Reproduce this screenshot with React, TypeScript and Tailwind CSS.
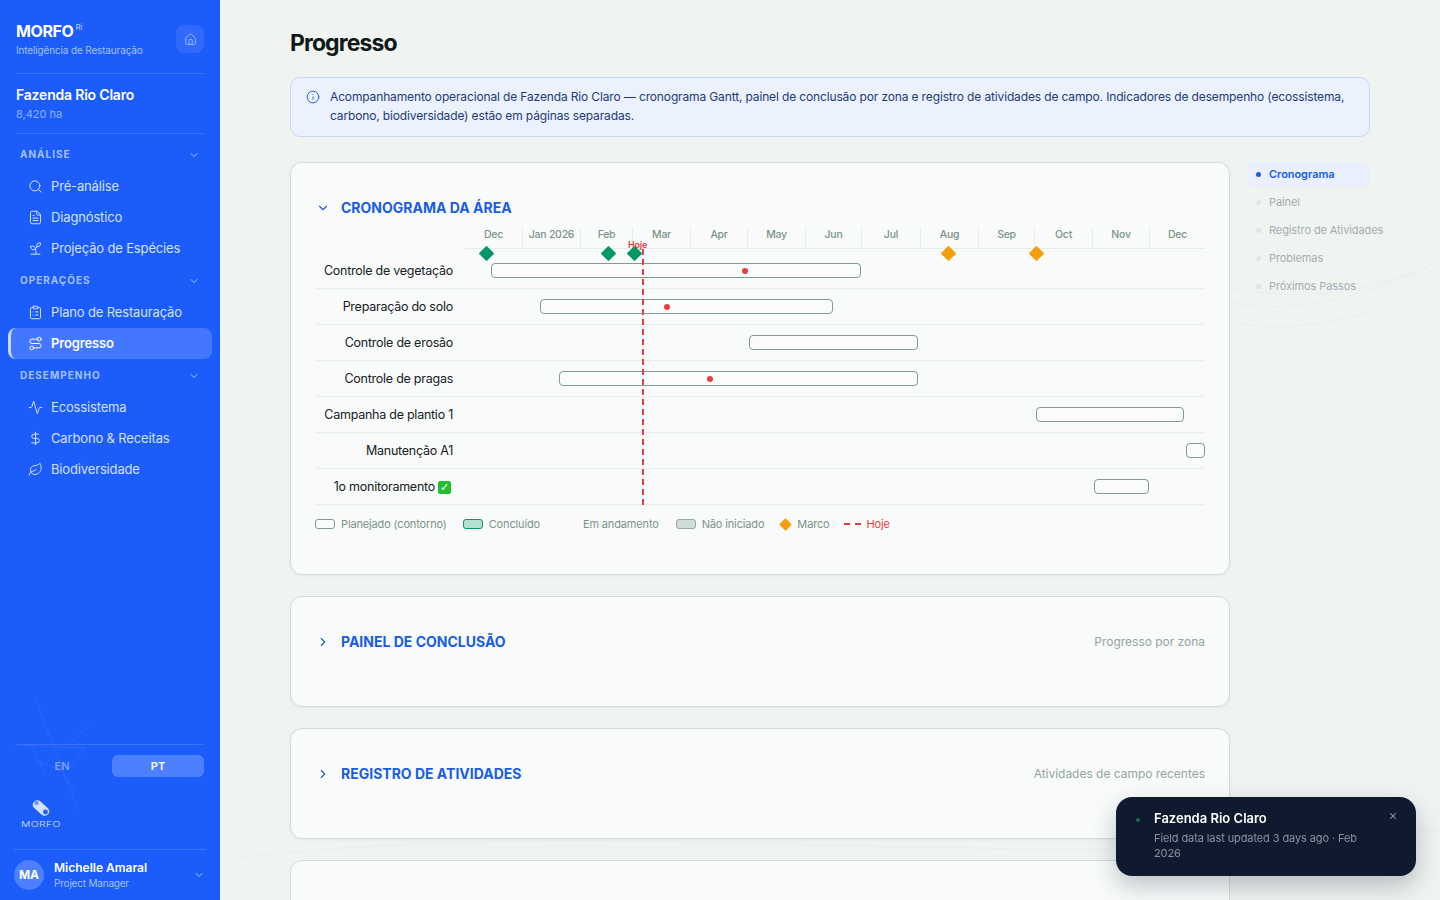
import {
  Activity,
  ChevronDown,
  ChevronRight,
  ClipboardList,
  DollarSign,
  FileText,
  House,
  Info,
  Leaf,
  Route,
  Search,
  Sprout,
  X,
} from 'lucide-react';

const TL_START = 465;
const pos = (x: number) => x - TL_START;

const months = [
  { name: 'Dec', w: 57 },
  { name: 'Jan 2026', w: 58 },
  { name: 'Feb', w: 52 },
  { name: 'Mar', w: 58 },
  { name: 'Apr', w: 57 },
  { name: 'May', w: 58 },
  { name: 'Jun', w: 56 },
  { name: 'Jul', w: 59 },
  { name: 'Aug', w: 58 },
  { name: 'Sep', w: 56 },
  { name: 'Oct', w: 58 },
  { name: 'Nov', w: 57 },
  { name: 'Dec', w: 56 },
];

const rows = [
  { label: 'Controle de vegetação', from: 491, to: 861, dot: 745 },
  { label: 'Preparação do solo', from: 540, to: 833, dot: 667 },
  { label: 'Controle de erosão', from: 749, to: 918 },
  { label: 'Controle de pragas', from: 559, to: 918, dot: 710 },
  { label: 'Campanha de plantio 1', from: 1036, to: 1184 },
  { label: 'Manutenção A1', from: 1186, to: 1205 },
  { label: '1o monitoramento', from: 1094, to: 1149, done: true },
];

const milestones = [
  { x: 486, color: 'bg-[#059669]' },
  { x: 608, color: 'bg-[#059669]' },
  { x: 634, color: 'bg-[#059669]' },
  { x: 948, color: 'bg-[#f59e0b]' },
  { x: 1036, color: 'bg-[#f59e0b]' },
];

const NavSection = ({ title }: { title: string }) => (
  <div className="flex h-[33px] items-center justify-between pl-[20px] pr-[20px]">
    <span className="text-[10px] font-bold tracking-[1px] text-[#a5c0ff]">{title}</span>
    <ChevronDown className="h-3 w-3 text-[#a5c0ff]" />
  </div>
);

const NavItem = ({ icon: Icon, label, active }: { icon: typeof Search; label: string; active?: boolean }) => (
  <div
    className={
      active
        ? 'mx-[8px] flex h-[31px] items-center gap-[8px] rounded-[8px] border-l-[3px] border-[#c7d8ff] bg-[#4377ff] pl-[17px] text-[13px] font-semibold tracking-[-0.15px] text-white'
        : 'mx-[8px] flex h-[31px] items-center gap-[8px] pl-[20px] text-[13px] tracking-[-0.15px] text-[#d3e0ff]'
    }
  >
    <Icon className="h-[15px] w-[15px]" strokeWidth={1.6} />
    <span>{label}</span>
  </div>
);

const Sidebar = () => (
  <aside className="relative flex h-screen w-[220px] shrink-0 flex-col overflow-hidden bg-[#1b5cfb] text-white">
    <svg className="absolute left-[10px] top-[690px] h-[120px] w-[110px] text-[#2c68fc]" viewBox="0 0 110 120" fill="none" stroke="currentColor" strokeWidth="1">
      <path d="M25 8 L68 120 M5 55 L75 58 M80 35 L58 55 M75 58 L60 78 M25 70 L50 80 L65 100 M22 55 L35 85" />
    </svg>
    <div className="relative mx-[16px] flex h-[74px] items-start justify-between border-b border-[#3a72fd] pt-[20px]">
      <div>
        <div className="flex items-start">
          <span className="text-[16px] font-bold leading-[22px] tracking-[-0.4px]">MORFO</span>
          <span className="ml-[2px] text-[8px] leading-[14px] text-[#b4caff]">Ri</span>
        </div>
        <div className="mt-[1px] text-[10px] leading-[14px] tracking-[-0.15px] text-[#a5c0ff]">Inteligência de Restauração</div>
      </div>
      <div className="mt-[5px] flex h-[28px] w-[28px] items-center justify-center rounded-[8px] bg-[#3069fb]">
        <House className="h-[13px] w-[13px] text-[#a5c0ff]" strokeWidth={1.6} />
      </div>
    </div>
    <div className="relative mx-[16px] h-[60px] border-b border-[#3a72fd] pt-[11px]">
      <div className="text-[14px] font-semibold leading-[20px] tracking-[-0.2px]">Fazenda Rio Claro</div>
      <div className="text-[11px] leading-[18px] text-[#8fb0ff]">8,420 ha</div>
    </div>
    <nav className="relative flex flex-col pt-[4px]">
      <NavSection title="ANÁLISE" />
      <NavItem icon={Search} label="Pré-análise" />
      <NavItem icon={FileText} label="Diagnóstico" />
      <NavItem icon={Sprout} label="Projeção de Espécies" />
      <NavSection title="OPERAÇÕES" />
      <NavItem icon={ClipboardList} label="Plano de Restauração" />
      <NavItem icon={Route} label="Progresso" active />
      <NavSection title="DESEMPENHO" />
      <NavItem icon={Activity} label="Ecossistema" />
      <NavItem icon={DollarSign} label="Carbono & Receitas" />
      <NavItem icon={Leaf} label="Biodiversidade" />
    </nav>
    <div className="relative mt-auto">
      <div className="mx-[16px] flex gap-[4px] border-t border-[#3a72fd] pt-[10px]">
        <div className="flex h-[22px] flex-1 items-center justify-center text-[11px] font-semibold text-[#7ea2fc]">EN</div>
        <div className="flex h-[22px] flex-1 items-center justify-center rounded-[6px] bg-[#4d80ff] text-[11px] font-semibold text-white">PT</div>
      </div>
      <div className="flex h-[72px] flex-col items-start pl-[21px] pt-[22px]">
        <svg className="ml-[11px] h-[18px] w-[18px]" viewBox="0 0 18 18">
          <rect x="-0.5" y="4.5" width="19" height="9" rx="4.5" fill="#d5e1ff" transform="rotate(42 9 9)" />
          <circle cx="4.5" cy="4" r="2.2" fill="#1b5cfb" opacity="0.55" />
          <circle cx="13.5" cy="13" r="2.4" fill="#1b5cfb" />
        </svg>
        <span className="mt-[3px] origin-left text-[7px] font-light leading-[9px] tracking-[0.2px] text-[#d5e1ff] [transform:scaleX(1.5)]">MORFO</span>
      </div>
      <div className="mx-[14px] flex h-[51px] items-center border-t border-[#3a72fd]">
        <div className="flex h-[30px] w-[30px] items-center justify-center rounded-full bg-[#4d80ff] text-[12px] font-bold">MA</div>
        <div className="ml-[10px] flex-1">
          <div className="text-[12px] font-semibold leading-[16px]">Michelle Amaral</div>
          <div className="text-[10px] leading-[15px] tracking-[-0.2px] text-[#a5c0ff]">Project Manager</div>
        </div>
        <ChevronDown className="mr-[1px] h-3 w-3 text-[#a5c0ff]" />
      </div>
    </div>
  </aside>
);

const Gantt = () => (
  <div>
    <div className="ml-[150px] flex h-[21px] border-b border-[#e6ecea]">
      {months.map((m, i) => (
        <div
          key={i}
          className={
            (i === 0 ? '' : 'border-l border-[#e9eeec] ') +
            'flex items-start justify-center text-[10.5px] font-medium leading-[14px] tracking-[-0.25px] text-[#7b9389]'
          }
          style={{ width: m.w }}
        >
          {m.name}
        </div>
      ))}
    </div>
    <div className="relative pt-[4px]">
      {rows.map((r) => (
        <div key={r.label} className="flex h-[36px] border-b border-[#e9eeec]">
          <div className="flex w-[150px] shrink-0 items-center justify-end pr-[12px] pt-[2px] text-[12.5px] tracking-[-0.25px] text-[#17211d]">
            {r.label}
            {r.done && (
              <span className="ml-[3px] mr-[2px] flex h-[13px] w-[13px] items-center justify-center rounded-[2px] bg-[#22c02f] font-['DejaVu_Sans',sans-serif] text-[11px] font-bold leading-none text-white">
                ✓
              </span>
            )}
          </div>
          <div className="relative flex-1">
            <div
              className="absolute top-[10px] h-[15px] rounded-[4px] border border-[#7f9c91] bg-white/30"
              style={{ left: pos(r.from), width: r.to - r.from }}
            />
            {r.dot && (
              <div
                className="absolute top-[15px] h-[6px] w-[6px] rounded-full bg-[#e53e3e]"
                style={{ left: pos(r.dot) - 3 }}
              />
            )}
          </div>
        </div>
      ))}
      <div className="absolute left-0 right-0 top-0 h-0">
        <div className="relative ml-[150px]">
          {milestones.map((m) => (
            <div
              key={m.x}
              className={'absolute top-[-1px] h-[11px] w-[11px] rotate-45 rounded-[1px] ' + m.color}
              style={{ left: pos(m.x) - 5.5 }}
            />
          ))}
          <div
            className="absolute top-0 h-[256px] w-0 border-l-2 border-dashed border-[#e53e3e]"
            style={{ left: pos(643) - 1 }}
          />
          <div
            className="absolute top-[-10px] text-[9px] font-semibold leading-[11px] tracking-[-0.2px] text-[#e53e3e]"
            style={{ left: pos(628) }}
          >
            Hoje
          </div>
        </div>
      </div>
    </div>
    <div className="mt-[13px] flex h-[12px] items-center text-[11px] tracking-[-0.15px] text-[#7b9389]">
      <span className="h-[10px] w-[20px] rounded-[3px] border border-[#7f9c91] bg-white/40" />
      <span className="ml-[6px]">Planejado (contorno)</span>
      <span className="ml-[16px] h-[10px] w-[20px] rounded-[3px] border border-[#059669] bg-[#b5e0d0]" />
      <span className="ml-[6px]">Concluído</span>
      <span className="ml-[17px] h-[10px] w-[20px]" />
      <span className="ml-[6px]">Em andamento</span>
      <span className="ml-[17px] h-[10px] w-[20px] rounded-[3px] border border-[#94aaa1] bg-[#d0dcd8]" />
      <span className="ml-[6px]">Não iniciado</span>
      <span className="ml-[17px] h-[9px] w-[9px] rotate-45 rounded-[1px] bg-[#f59e0b]" />
      <span className="ml-[7px]">Marco</span>
      <span className="ml-[14px] w-[17px] border-t-2 border-dashed border-[#e53e3e]" />
      <span className="ml-[6px] text-[#e53e3e]">Hoje</span>
    </div>
  </div>
);

const Card = ({ title, hint, open, children }: { title: string; hint?: string; open?: boolean; children?: React.ReactNode }) => (
  <section className="shrink-0 rounded-[12px] border border-[#d5dcd9] bg-[#f8fbfa] px-[24px] pt-[36px] shadow-[0_1px_3px_rgba(20,50,40,0.06)]">
    <div className="flex h-[17px] items-center">
      {open ? (
        <ChevronDown className="ml-[1px] h-[14px] w-[14px] text-[#1b5ce5]" strokeWidth={2} />
      ) : (
        <ChevronRight className="ml-[1px] h-[14px] w-[14px] text-[#1b5ce5]" strokeWidth={2} />
      )}
      <h2 className="ml-[11px] text-[14px] font-bold text-[#1b5ce5]">{title}</h2>
      {hint && <span className="ml-auto text-[12px] tracking-[-0.02px] text-[#94a5a0]">{hint}</span>}
    </div>
    {children}
  </section>
);

const tocItems = ['Cronograma', 'Painel', 'Registro de Atividades', 'Problemas', 'Próximos Passos'];

export default function App() {
  return (
    <div className="flex h-screen overflow-hidden bg-[#eff4f1] font-['Inter','Liberation_Sans',sans-serif]">
      <Sidebar />
      <main className="relative flex-1 overflow-hidden">
        <svg className="absolute inset-0 h-full w-full text-[#e9efec]" viewBox="0 0 1220 900" fill="none" stroke="currentColor">
          <path d="M1000 300 C1080 320 1160 290 1220 260" />
          <path d="M1000 320 C1080 340 1160 310 1220 290" />
          <path d="M1000 285 C1100 310 1160 280 1220 270" />
          <path d="M0 860 C400 810 800 880 1220 830" />
        </svg>
        <div className="relative px-[70px] pt-[27px]">
          <h1 className="text-[23px] font-bold leading-[32px] tracking-[-0.9px] text-[#111a16]">Progresso</h1>
          <div className="mt-[18px] flex h-[60px] items-start rounded-[10px] border border-[#c7d9f6] bg-[#ebf1fd] pl-[15px] pr-[20px] pt-[9px]">
            <Info className="mt-[3px] h-[14px] w-[14px] shrink-0 text-[#1b5ce5]" strokeWidth={1.6} />
            <p className="ml-[10px] text-[12px] leading-[19px] tracking-[-0.14px] text-[#1e3a78]">
              Acompanhamento operacional de Fazenda Rio Claro — cronograma Gantt, painel de conclusão por zona e registro de atividades de campo. Indicadores de desempenho (ecossistema, carbono, biodiversidade) estão em páginas separadas.
            </p>
          </div>
          <div className="mt-[25px] flex gap-[20px]">
            <div className="flex w-[940px] shrink-0 flex-col gap-[21px]">
              <Card title="CRONOGRAMA DA ÁREA" open>
                <div className="mt-[12px] h-[346px]">
                  <Gantt />
                </div>
              </Card>
              <Card title="PAINEL DE CONCLUSÃO" hint="Progresso por zona">
                <div className="h-[56px]" />
              </Card>
              <Card title="REGISTRO DE ATIVIDADES" hint="Atividades de campo recentes">
                <div className="h-[56px]" />
              </Card>
              <section className="h-[110px] shrink-0 rounded-[12px] border border-[#d5dcd9] bg-[#f8fbfa]" />
            </div>
            <div className="-ml-[3px] flex w-[123px] flex-col">
              {tocItems.map((t, i) => (
                <div
                  key={t}
                  className={
                    i === 0
                      ? 'flex h-[25px] items-center whitespace-nowrap rounded-[6px] bg-[#e9effd] pl-[9px] text-[11px] font-semibold tracking-[-0.05px] text-[#1b5ce5]'
                      : 'mt-[3px] flex h-[25px] items-center whitespace-nowrap pl-[9px] text-[11px] tracking-[-0.1px] text-[#a3adb4]'
                  }
                >
                  <span className={i === 0 ? 'mr-[8px] h-[5px] w-[5px] shrink-0 rounded-full bg-[#1b5ce5]' : 'mr-[8px] h-[5px] w-[5px] shrink-0 rounded-full bg-[#dfe5e6]'} />
                  {t}
                </div>
              ))}
            </div>
          </div>
        </div>
      </main>
      <div className="fixed bottom-[24px] right-[24px] flex h-[79px] w-[300px] items-start rounded-[16px] bg-[#0f1a2e] pl-[20px] pr-[18px] pt-[13px] shadow-[0_10px_25px_rgba(15,26,46,0.25)]">
        <span className="mt-[8px] h-[4px] w-[4px] shrink-0 rounded-full bg-[#166a4d]" />
        <div className="ml-[14px] flex-1">
          <div className="text-[13px] font-semibold leading-[17px] text-white">Fazenda Rio Claro</div>
          <div className="mt-[4px] w-[210px] text-[11px] leading-[15px] tracking-[-0.1px] text-[#8b93a3]">Field data last updated 3 days ago · Feb 2026</div>
        </div>
        <X className="mt-[1px] h-[10px] w-[10px] text-[#9aa2b0]" strokeWidth={2.5} />
      </div>
    </div>
  );
}
